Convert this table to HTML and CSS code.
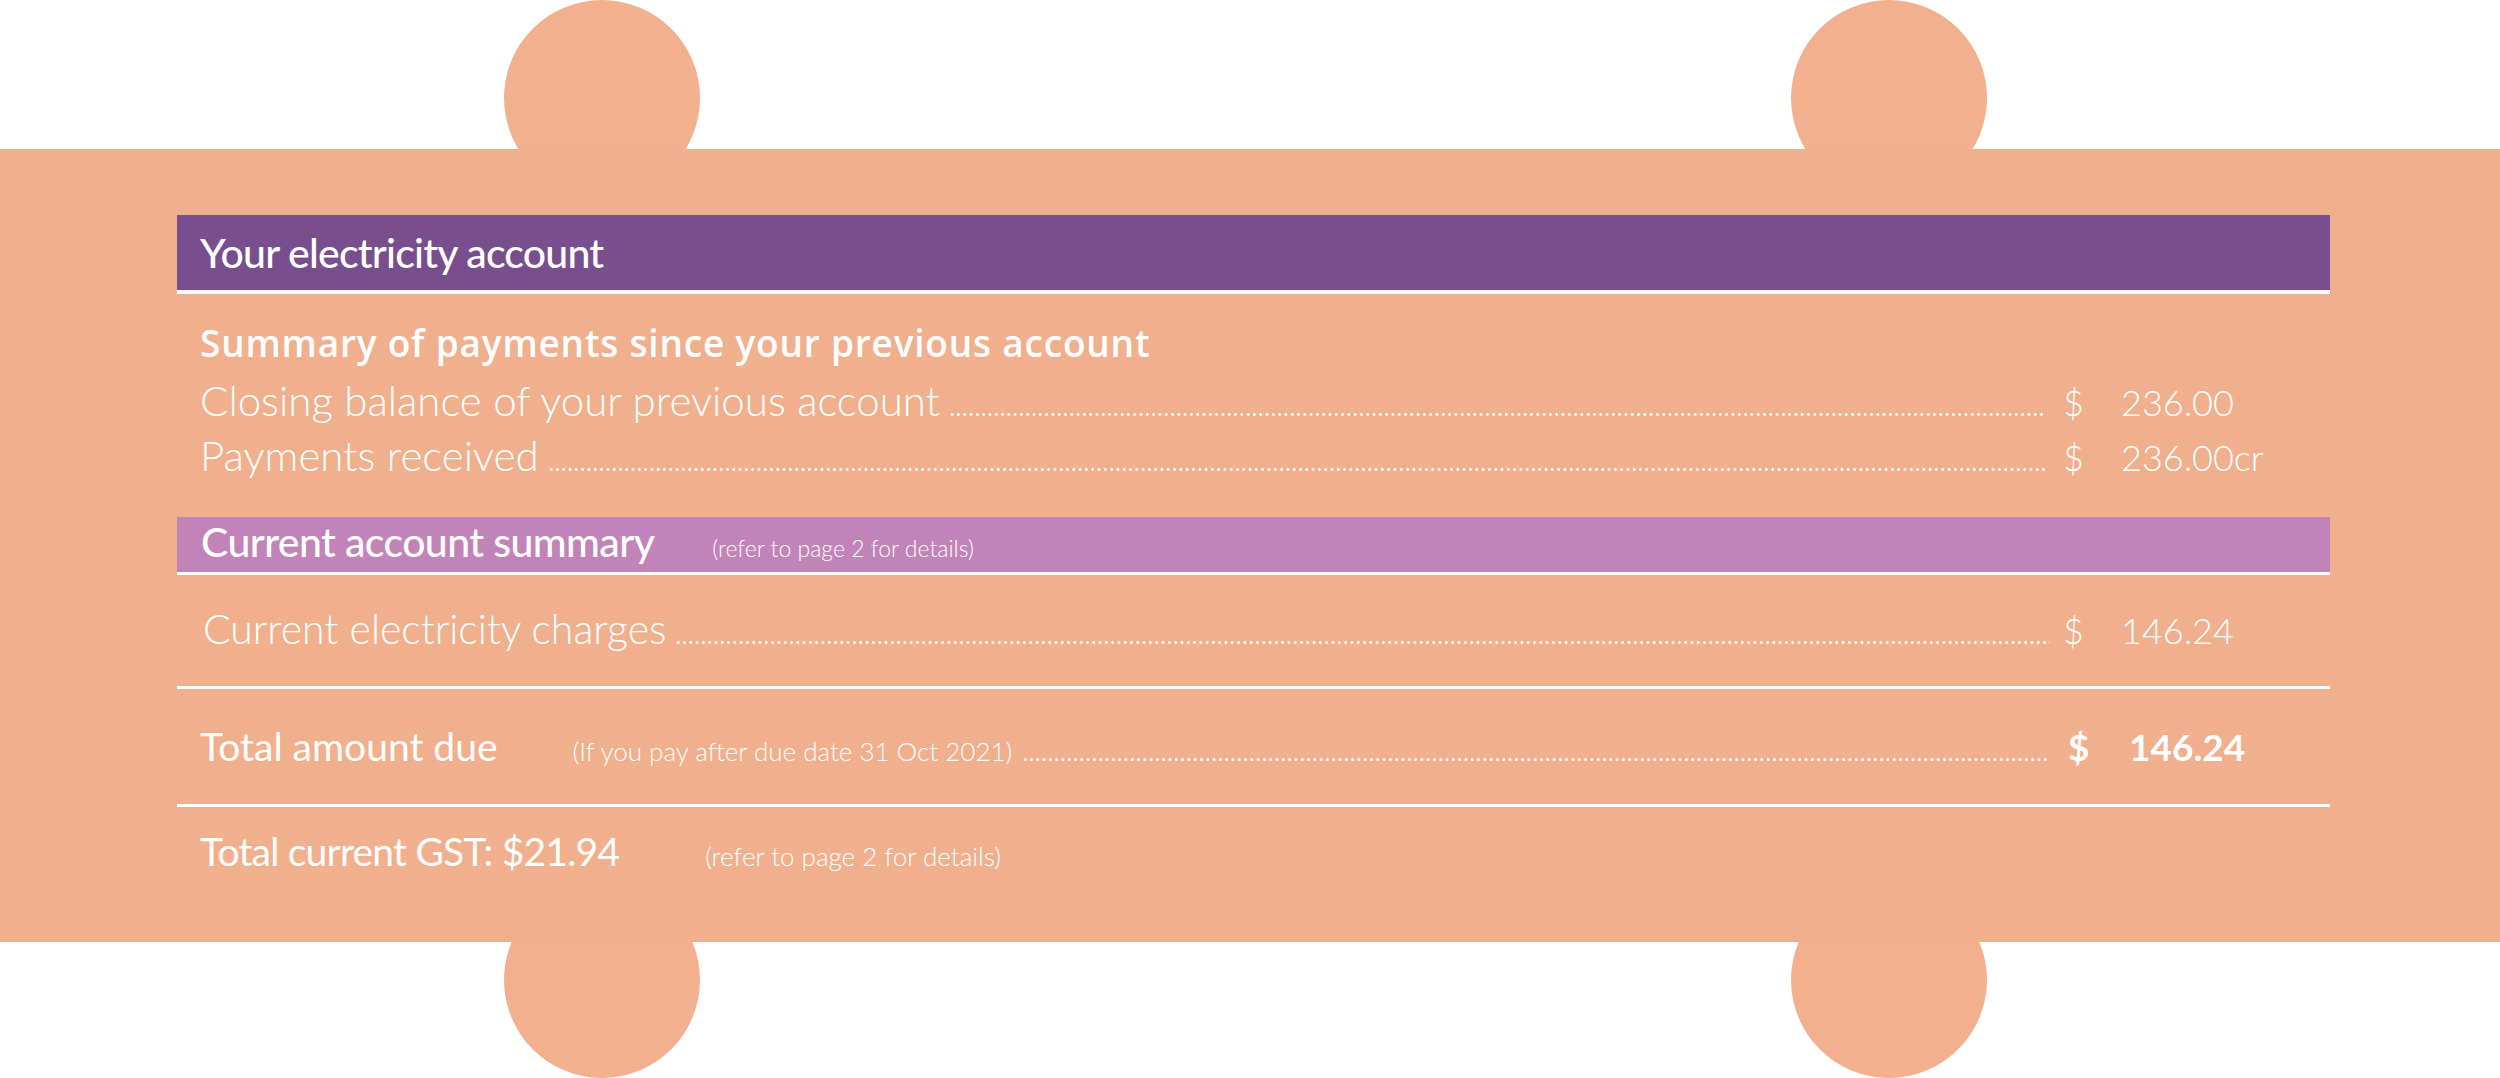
FILE: index.html
```html
<!DOCTYPE html>
<html lang="en">
<head>
<meta charset="utf-8">
<title>Your electricity account</title>
<link rel="stylesheet" href="styles.css">
</head>
<body>
<div class="stage">
  <div class="blob blob-tl"></div>
  <div class="blob blob-tr"></div>
  <div class="blob blob-bl"></div>
  <div class="blob blob-br"></div>
  <section class="card">
    <div class="panel">
      <h1 class="bar bar-dark">Your electricity account</h1>
      <div class="group">
        <h2 class="group-title">Summary of payments since your previous account</h2>
        <div class="line line-first">
          <span class="label">Closing balance of your previous account</span>
          <span class="leader"></span>
          <span class="cur">$</span>
          <span class="amt">236.00</span>
        </div>
        <div class="line line-second">
          <span class="label">Payments received</span>
          <span class="leader"></span>
          <span class="cur">$</span>
          <span class="amt">236.00cr</span>
        </div>
      </div>
      <h2 class="bar bar-light">Current account summary<span class="bar-note">(refer to page 2 for details)</span></h2>
      <div class="line line-charges">
        <span class="label">Current electricity charges</span>
        <span class="leader"></span>
        <span class="cur">$</span>
        <span class="amt">146.24</span>
      </div>
      <div class="line line-total">
        <span class="title-label">Total amount due</span>
        <span class="note note-due">(If you pay after due date 31 Oct 2021)</span>
        <span class="leader"></span>
        <span class="cur">$</span>
        <span class="amt">146.24</span>
      </div>
      <div class="line line-gst">
        <span class="title-label title-gst">Total current GST: $21.94</span>
        <span class="note note-gst">(refer to page 2 for details)</span>
      </div>
    </div>
  </section>
</div>
</body>
</html>
```

FILE: styles.css
```css
* { box-sizing: border-box; }

html, body {
  margin: 0;
  padding: 0;
  background: #ffffff;
}

body {
  width: 2500px;
  height: 1078px;
  overflow: hidden;
  font-family: "Lato", "Liberation Sans", sans-serif;
  color: #ffffff;
}

.stage {
  display: grid;
  width: 2500px;
  height: 1078px;
  grid-template-columns: 504px 196px 1091px 196px 513px;
  grid-template-rows: 149px 793px 136px;
}

.blob {
  width: 196px;
  height: 196px;
  border-radius: 50%;
  background: #f2b08e;
  z-index: 0;
}

.blob-tl { grid-column: 2; grid-row: 1 / 3; align-self: start; }
.blob-tr { grid-column: 4; grid-row: 1 / 3; align-self: start; }
.blob-bl { grid-column: 2; grid-row: 2 / 4; align-self: end; }
.blob-br { grid-column: 4; grid-row: 2 / 4; align-self: end; }

.card {
  grid-column: 1 / 6;
  grid-row: 2;
  position: relative;
  z-index: 1;
  background: #f0b08d;
  padding: 66px 170px 0 177px;
}

.panel {
  display: flex;
  flex-direction: column;
}

.bar {
  margin: 0;
  display: flex;
  align-items: baseline;
  font-weight: 500;
  font-size: 41px;
  line-height: 42px;
  letter-spacing: -0.8px;
  color: #ffffff;
  white-space: nowrap;
}

.bar-dark {
  background: #784e8e;
  height: 79px;
  padding: 17px 0 0 23px;
  border-bottom: 4px solid #ffffff;
}

.bar-light {
  background: #c283b8;
  height: 58px;
  padding: 4px 0 0 24px;
  border-bottom: 3px solid #ffffff;
  letter-spacing: -0.6px;
}

.bar-note {
  font-weight: 300;
  font-size: 23px;
  line-height: 23px;
  letter-spacing: 0;
  margin-left: 58px;
}

.group {
  padding: 31px 0 41px 23px;
}

.group-title {
  margin: 0;
  font-family: "Open Sans", "Lato", sans-serif;
  font-weight: 600;
  font-size: 37px;
  line-height: 36px;
  letter-spacing: 0.8px;
  white-space: nowrap;
}

.line {
  display: flex;
  align-items: baseline;
}

.label {
  font-weight: 300;
  font-size: 42px;
  line-height: 42px;
  white-space: nowrap;
}

.leader {
  flex: 1;
  height: 3px;
  margin: 0 18px 0 9px;
  background-image: radial-gradient(circle, #ffffff 1.1px, rgba(255, 255, 255, 0) 1.7px);
  background-size: 6.3px 3px;
  background-repeat: repeat-x;
}

.cur {
  width: 58px;
  font-weight: 300;
  font-size: 36px;
  line-height: 36px;
}

.amt {
  width: 209px;
  font-weight: 300;
  font-size: 36px;
  line-height: 36px;
  white-space: nowrap;
}

.line-first { margin-top: 18px; }
.line-second { margin-top: 13px; }

.line-charges {
  height: 114px;
  padding: 34px 0 0 26px;
  border-bottom: 3px solid #ffffff;
}

.line-charges .label {
  font-size: 41px;
  line-height: 40px;
}

.line-charges .leader { margin-right: 13px; }

.line-total {
  height: 118px;
  padding: 37px 0 0 23px;
  border-bottom: 3px solid #ffffff;
}

.line-total .leader { margin: 0 20px 0 10px; }

.line-total .cur {
  width: 61px;
  font-weight: 700;
  font-size: 37px;
  line-height: 38px;
}

.line-total .amt {
  width: 201px;
  font-weight: 700;
  font-size: 37px;
  line-height: 38px;
}

.line-gst {
  padding: 24px 0 0 23px;
}

.title-label {
  font-weight: 400;
  font-size: 39px;
  line-height: 40px;
  white-space: nowrap;
}

.title-gst {
  letter-spacing: -0.8px;
}

.note {
  font-weight: 300;
  font-size: 26px;
  line-height: 26px;
  white-space: nowrap;
}

.note-due { margin-left: 75px; }
.note-gst { margin-left: 86px; }
```
